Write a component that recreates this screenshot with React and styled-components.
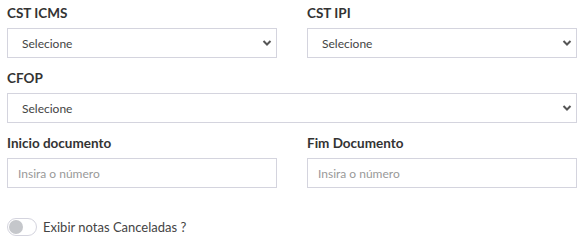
import React, { useState } from "react";
import styled, { createGlobalStyle } from "styled-components";

const GlobalStyle = createGlobalStyle`
  body {
    margin: 0;
    background: #fff;
    font-family: Lato, "Open Sans", sans-serif;
  }
`;

const Form = styled.div`
  padding: 3px 9px 0 7px;
  display: grid;
  grid-template-columns: 270px 270px;
  column-gap: 30px;
  row-gap: 10px;
`;

const Field = styled.div`
  display: flex;
  flex-direction: column;
  gap: 5px;
  grid-column: ${(p) => (p.$full ? "1 / -1" : "auto")};
`;

const Label = styled.label`
  font-size: 13.5px;
  font-weight: 700;
  line-height: 20px;
  color: #333;
`;

const SelectWrap = styled.div`
  position: relative;
`;

const Select = styled.select`
  appearance: none;
  width: 100%;
  height: 30px;
  box-sizing: border-box;
  border: 1px solid #d4d4de;
  border-radius: 0;
  background: #fff;
  padding: 0 30px 0 14px;
  font-family: inherit;
  font-size: 12px;
  color: #444;
  outline: none;
`;

const Chevron = styled.svg`
  position: absolute;
  right: 5px;
  top: 11px;
  width: 10px;
  height: 8px;
  pointer-events: none;
`;

const Input = styled.input`
  width: 100%;
  height: 30px;
  box-sizing: border-box;
  border: 1px solid #d4d4de;
  padding: 0 10px;
  font-family: inherit;
  font-size: 12px;
  color: #444;
  outline: none;
  &::placeholder {
    color: #999;
  }
`;

const ToggleRow = styled.div`
  grid-column: 1 / -1;
  display: flex;
  align-items: center;
  gap: 6px;
  margin-top: 20px;
`;

const Switch = styled.button`
  width: 30px;
  height: 18px;
  box-sizing: border-box;
  border: 1px solid #d4d4de;
  border-radius: 9px;
  background: #fff;
  padding: 1px;
  display: flex;
  align-items: center;
  justify-content: ${(p) => (p.$on ? "flex-end" : "flex-start")};
  cursor: pointer;
`;

const Knob = styled.span`
  width: 14px;
  height: 14px;
  border-radius: 50%;
  background: #c5c7cb;
`;

const ToggleText = styled.span`
  font-size: 13px;
  color: #444;
`;

const SelectField = ({ label, full }) => (
  <Field $full={full}>
    <Label>{label}</Label>
    <SelectWrap>
      <Select defaultValue="">
        <option value="">Selecione</option>
      </Select>
      <Chevron viewBox="0 0 10 8">
        <path d="M1.5 2 L5 5.5 L8.5 2" fill="none" stroke="#555" strokeWidth="2" />
      </Chevron>
    </SelectWrap>
  </Field>
);

const InputField = ({ label }) => (
  <Field>
    <Label>{label}</Label>
    <Input placeholder="Insira o número" />
  </Field>
);

export default function App() {
  const [on, setOn] = useState(false);
  return (
    <>
      <GlobalStyle />
      <Form>
        <SelectField label="CST ICMS" />
        <SelectField label="CST IPI" />
        <SelectField label="CFOP" full />
        <InputField label="Inicio documento" />
        <InputField label="Fim Documento" />
        <ToggleRow>
          <Switch $on={on} onClick={() => setOn((v) => !v)}>
            <Knob />
          </Switch>
          <ToggleText>Exibir notas Canceladas ?</ToggleText>
        </ToggleRow>
      </Form>
    </>
  );
}
